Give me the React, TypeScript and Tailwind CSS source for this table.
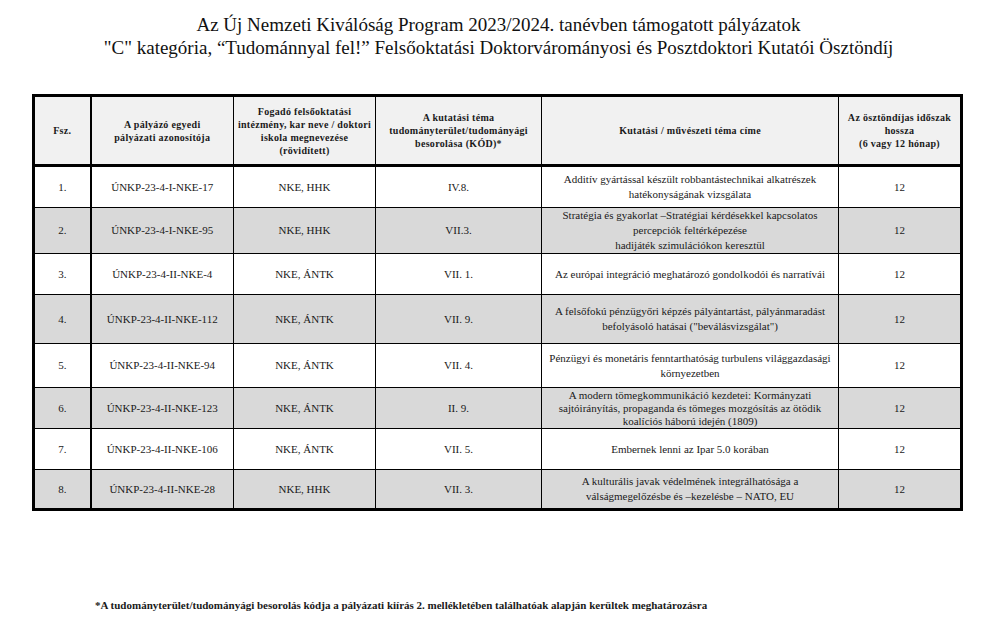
import React from "react";

type Row = { n: string; id: string; inst: string; kod: string; title: React.ReactNode; len: string; h: number; gray: boolean; tight?: boolean };

const rows: Row[] = [
  { n: "1.", id: "ÚNKP-23-4-I-NKE-17", inst: "NKE, HHK", kod: "IV.8.", title: <>Additív gyártással készült robbantástechnikai alkatrészek<br />hatékonyságának vizsgálata</>, len: "12", h: 42, gray: false },
  { n: "2.", id: "ÚNKP-23-4-I-NKE-95", inst: "NKE, HHK", kod: "VII.3.", title: <>Stratégia és gyakorlat –Stratégiai kérdésekkel kapcsolatos<br />percepciók feltérképezése<br />hadijáték szimulációkon keresztül</>, len: "12", h: 46, gray: true },
  { n: "3.", id: "ÚNKP-23-4-II-NKE-4", inst: "NKE, ÁNTK", kod: "VII. 1.", title: <>Az európai integráció meghatározó gondolkodói és narratívái</>, len: "12", h: 41, gray: false },
  { n: "4.", id: "ÚNKP-23-4-II-NKE-112", inst: "NKE, ÁNTK", kod: "VII. 9.", title: <>A felsőfokú pénzügyőri képzés pályántartást, pályánmaradást<br />befolyásoló hatásai ("beválásvizsgálat")</>, len: "12", h: 49, gray: true },
  { n: "5.", id: "ÚNKP-23-4-II-NKE-94", inst: "NKE, ÁNTK", kod: "VII. 4.", title: <>Pénzügyi és monetáris fenntarthatóság turbulens világgazdasági<br />környezetben</>, len: "12", h: 44, gray: false },
  { n: "6.", id: "ÚNKP-23-4-II-NKE-123", inst: "NKE, ÁNTK", kod: "II. 9.", title: <>A modern tömegkommunikáció kezdetei: Kormányzati<br />sajtóirányítás, propaganda és tömeges mozgósítás az ötödik<br />koalíciós háború idején (1809)</>, len: "12", h: 41, gray: true, tight: true },
  { n: "7.", id: "ÚNKP-23-4-II-NKE-106", inst: "NKE, ÁNTK", kod: "VII. 5.", title: <>Embernek lenni az Ipar 5.0 korában</>, len: "12", h: 41, gray: false },
  { n: "8.", id: "ÚNKP-23-4-II-NKE-28", inst: "NKE, HHK", kod: "VII. 3.", title: <>A kulturális javak védelmének integrálhatósága a<br />válságmegelőzésbe és –kezelésbe – NATO, EU</>, len: "12", h: 40, gray: true },
];

const serif = { fontFamily: '"Liberation Serif", "Times New Roman", serif' };

export default function App() {
  return (
    <div className="w-[997px] h-[635px] bg-white text-[#1a1a1a] relative" style={serif}>
      <div className="pt-[13px] text-center text-[19px] leading-[23px] text-[#111]" style={serif}>
        <div>Az Új Nemzeti Kiválóság Program 2023/2024. tanévben támogatott pályázatok</div>
        <div>"C" kategória, “Tudománnyal fel!” Felsőoktatási Doktorvárományosi és Posztdoktori Kutatói Ösztöndíj</div>
      </div>
      <div className="pl-[32px] pt-[35px]">
        <table className="border-collapse table-fixed w-[928px] border-[3px] border-black text-[#1a1a1a]" style={serif}>
          <colgroup>
            <col className="w-[57px]" />
            <col className="w-[143px]" />
            <col className="w-[142px]" />
            <col className="w-[166px]" />
            <col className="w-[297px]" />
            <col className="w-[123px]" />
          </colgroup>
          <thead>
            <tr className="h-[70px] bg-[#f1f1f1] text-[10px] leading-[13px] font-bold tracking-[0.3px]">
              <th className="border-r-2 border-b-[3px] border-black font-bold">Fsz.</th>
              <th className="border border-b-[3px] border-black font-bold">A pályázó egyedi<br />pályázati azonosítója</th>
              <th className="border border-b-[3px] border-black font-bold">Fogadó felsőoktatási<br />intézmény, kar neve / doktori<br />iskola megnevezése<br />(rövidített)</th>
              <th className="border border-b-[3px] border-black font-bold">A kutatási téma<br />tudományterület/tudományági<br />besorolása (KÓD)*</th>
              <th className="border border-b-[3px] border-black font-bold">Kutatási / művészeti téma címe</th>
              <th className="border border-b-[3px] border-black font-bold">Az ösztöndíjas időszak<br />hossza<br />(6 vagy 12 hónap)</th>
            </tr>
          </thead>
          <tbody className="text-[11px] leading-[15px] text-center">
            {rows.map((r) => (
              <tr key={r.n} className={r.gray ? "bg-[#d9d9d9]" : "bg-white"} style={{ height: r.h }}>
                <td className="border-r-2 border-b border-black">{r.n}</td>
                <td className="border border-black">{r.id}</td>
                <td className="border border-black">{r.inst}</td>
                <td className="border border-black">{r.kod}</td>
                <td className={"border border-black px-1 " + (r.tight ? "leading-[13px]" : "")}>{r.title}</td>
                <td className="border border-black">{r.len}</td>
              </tr>
            ))}
          </tbody>
        </table>
      </div>
      <div className="absolute left-[95px] top-[597px] text-[11px] font-bold" style={serif}>
        *A tudományterület/tudományági besorolás kódja a pályázati kiírás 2. mellékletében találhatóak alapján kerültek meghatározásra
      </div>
    </div>
  );
}
